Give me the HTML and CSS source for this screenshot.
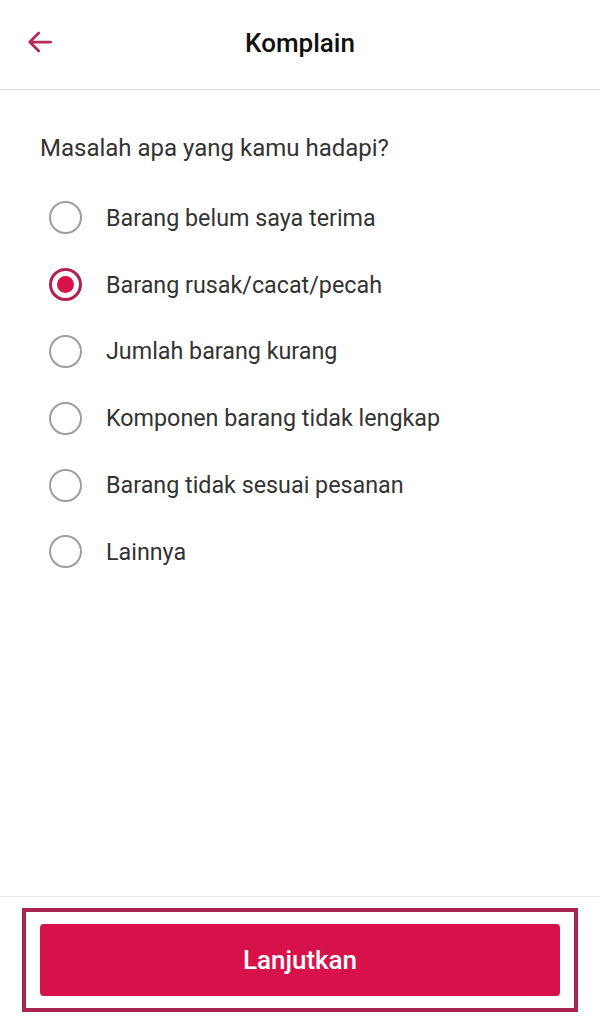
FILE: index.html
```html
<!DOCTYPE html>
<html lang="id">
<head>
    <meta charset="UTF-8">
    <meta name="viewport" content="width=device-width, initial-scale=1.0">
    <title>Komplain</title>
    <link rel="stylesheet" href="styles.css">
</head>
<body>
    <div class="page">
        <div class="header">
            <button class="back-btn" aria-label="Kembali">
                <svg width="30" height="30" viewBox="0 0 24 24">
                    <path d="M20.5 12H3.8M11 4.8L3.8 12l7.2 7.2" fill="none" stroke="#b72a58" stroke-width="2.2" stroke-linecap="round" stroke-linejoin="round"/>
                </svg>
            </button>
            <h1>Komplain</h1>
        </div>

        <div class="content">
            <p class="question">Masalah apa yang kamu hadapi?</p>
            <div class="options">
                <label class="option">
                    <input type="radio" name="masalah">
                    <span class="radio"></span>
                    <span class="label-text">Barang belum saya terima</span>
                </label>
                <label class="option">
                    <input type="radio" name="masalah" checked>
                    <span class="radio"></span>
                    <span class="label-text">Barang rusak/cacat/pecah</span>
                </label>
                <label class="option">
                    <input type="radio" name="masalah">
                    <span class="radio"></span>
                    <span class="label-text">Jumlah barang kurang</span>
                </label>
                <label class="option">
                    <input type="radio" name="masalah">
                    <span class="radio"></span>
                    <span class="label-text">Komponen barang tidak lengkap</span>
                </label>
                <label class="option">
                    <input type="radio" name="masalah">
                    <span class="radio"></span>
                    <span class="label-text">Barang tidak sesuai pesanan</span>
                </label>
                <label class="option">
                    <input type="radio" name="masalah">
                    <span class="radio"></span>
                    <span class="label-text">Lainnya</span>
                </label>
            </div>
        </div>

        <div class="footer">
            <div class="highlight">
                <button class="btn-next">Lanjutkan</button>
            </div>
        </div>
    </div>
</body>
</html>
```

FILE: styles.css
```css
* {
    margin: 0;
    padding: 0;
    box-sizing: border-box;
    font-family: 'Roboto', 'Liberation Sans', sans-serif;
}

body {
    background: #fff;
    width: 600px;
    height: 1024px;
    overflow: hidden;
}

.page {
    display: flex;
    flex-direction: column;
    height: 1024px;
}

.header {
    height: 90px;
    display: flex;
    align-items: center;
    justify-content: center;
    position: relative;
    border-bottom: 1px solid #dcdcdc;
    flex-shrink: 0;
}

.back-btn {
    position: absolute;
    left: 25px;
    top: 27px;
    background: none;
    border: none;
    width: 30px;
    height: 30px;
    display: flex;
}

.header h1 {
    font-size: 26px;
    font-weight: 500;
    color: #111;
    margin-top: -4px;
}

.content {
    flex: 1;
    padding: 42px 40px 0;
}

.question {
    font-size: 24px;
    color: #333;
    line-height: 32px;
}

.options {
    display: flex;
    flex-direction: column;
    margin-top: 20.5px;
}

.option {
    display: flex;
    align-items: center;
    height: 66.8px;
    padding-left: 9px;
    cursor: pointer;
}

.option input {
    display: none;
}

.radio {
    width: 33px;
    height: 33px;
    border: 2.5px solid #9e9e9e;
    border-radius: 50%;
    flex-shrink: 0;
    position: relative;
}

.option input:checked + .radio {
    border: 3px solid #b3214f;
}

.option input:checked + .radio::after {
    content: '';
    position: absolute;
    top: 5px;
    left: 5px;
    right: 5px;
    bottom: 5px;
    border-radius: 50%;
    background: #d7134b;
}

.label-text {
    margin-left: 24px;
    font-size: 23.3px;
    color: #333;
}

.footer {
    height: 128px;
    border-top: 1px solid #ececec;
    padding: 11px 22px 0;
    flex-shrink: 0;
}

.highlight {
    border: 4px solid #a8234f;
    padding: 12px 14px;
    height: 104px;
}

.btn-next {
    width: 100%;
    height: 72px;
    background: #d7124a;
    border: none;
    border-radius: 4px;
    color: #fff;
    font-size: 26px;
    font-weight: 500;
}
```
